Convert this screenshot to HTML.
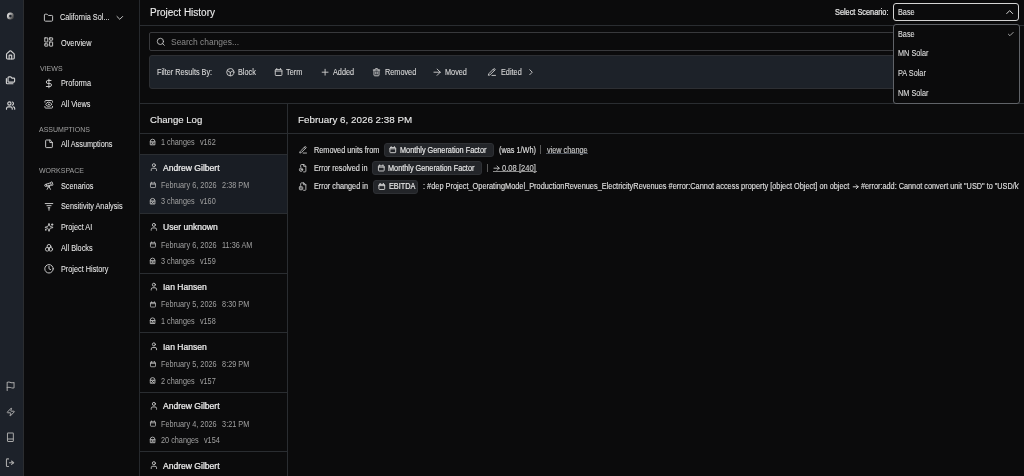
<!DOCTYPE html>
<html><head><meta charset="utf-8">
<style>
*{box-sizing:border-box;margin:0;padding:0}
html,body{width:1024px;height:476px;overflow:hidden;background:#0b0b0c;font-family:"Liberation Sans",sans-serif;color:#e6e6e6}
.a{position:absolute;white-space:nowrap}
svg{position:absolute;overflow:visible}
#rail{position:absolute;left:0;top:0;width:24px;height:476px;background:#1d222a;border-right:1px solid #2b2d30}
#side{position:absolute;left:24px;top:0;width:116px;height:476px;background:#0b0b0c;border-right:1px solid #26292d}
.t{transform:scaleY(1.15);transform-origin:0 50%;will-change:transform}
.nav{font-size:7.3px;line-height:10px;color:#ebebeb;-webkit-text-stroke:0.04px #ebebeb}
.sec{font-size:7px;line-height:10px;color:#a0a0a0}
.fl{font-size:7.3px;line-height:10px;color:#d8d8d8;-webkit-text-stroke:0.1px #d8d8d8}
.dd{font-size:7.3px;line-height:10px;color:#dcdcdc;-webkit-text-stroke:0.1px #dcdcdc}
.ls{font-size:7.3px;line-height:10px;color:#a0a0a0}
.ln{font-size:8.55px;line-height:10px;color:#f0f0f0;-webkit-text-stroke:0.22px #f0f0f0;will-change:transform}
.dt{font-size:7.3px;line-height:10px;color:#e0e0e0;-webkit-text-stroke:0.1px #e0e0e0}
.hd{color:#ececec;-webkit-text-stroke:0.12px #ececec;will-change:transform}
.ck{color:#e8e8e8;-webkit-text-stroke:0.15px #e8e8e8}
.chip{position:absolute;background:#232529;border:1px solid #2e3034;border-radius:3px}
.hl{position:absolute;height:1px;background:#2a2d31}
.vl{position:absolute;width:1px;background:#2a2d31}
</style></head><body>
<div id="rail"></div>
<svg style="left:0;top:0" width="1024" height="476" viewBox="0 0 1024 476"><defs><linearGradient id="lg" x1="0" y1="0.3" x2="1" y2="0.8"><stop offset="0" stop-color="#d4d4d4"/><stop offset="0.6" stop-color="#8a8a8a"/><stop offset="1" stop-color="#4a4a4a"/></linearGradient></defs>
<circle cx="10.4" cy="16.1" r="2.4" fill="none" stroke="url(#lg)" stroke-width="2.2"/><g transform="translate(5.240,49.940) scale(0.43)" fill="none" stroke="#d2d2d2" stroke-width="2.674" stroke-linecap="round" stroke-linejoin="round"><path d="M15 21v-8a1 1 0 0 0-1-1h-4a1 1 0 0 0-1 1v8"/><path d="M3 10a2 2 0 0 1 .709-1.528l7-5.999a2 2 0 0 1 2.582 0l7 5.999A2 2 0 0 1 21 10v9a2 2 0 0 1-2 2H5a2 2 0 0 1-2-2z"/></g><g transform="translate(5.580,75.180) scale(0.41)" fill="none" stroke="#d2d2d2" stroke-width="2.805" stroke-linecap="round" stroke-linejoin="round"><path d="M20 17a2 2 0 0 0 2-2V9a2 2 0 0 0-2-2h-3.9a2 2 0 0 1-1.69-.9l-.81-1.2a2 2 0 0 0-1.67-.9H8a2 2 0 0 0-2 2v9a2 2 0 0 0 2 2Z"/><path d="M2 8v11a2 2 0 0 0 2 2h14"/></g><g transform="translate(5.680,100.680) scale(0.41)" fill="none" stroke="#d2d2d2" stroke-width="2.805" stroke-linecap="round" stroke-linejoin="round"><path d="M16 21v-2a4 4 0 0 0-4-4H6a4 4 0 0 0-4 4v2"/><circle cx="9" cy="7" r="4"/><path d="M22 21v-2a4 4 0 0 0-3-3.87"/><path d="M16 3.13a4 4 0 0 1 0 7.75"/></g><g transform="translate(5.440,381.140) scale(0.43)" fill="none" stroke="#a8a8a8" stroke-width="2.326" stroke-linecap="round" stroke-linejoin="round"><path d="M4 15s1-1 4-1 5 2 8 2 4-1 4-1V3s-1 1-4 1-5-2-8-2-4 1-4 1z"/><path d="M4 22v-7"/></g><g transform="translate(6.000,407.200) scale(0.4)" fill="none" stroke="#a8a8a8" stroke-width="2.500" stroke-linecap="round" stroke-linejoin="round"><path d="M4 14a1 1 0 0 1-.78-1.63l9.9-10.2a.5.5 0 0 1 .86.46l-1.92 6.02A1 1 0 0 0 13 10h7a1 1 0 0 1 .78 1.63l-9.9 10.2a.5.5 0 0 1-.86-.46l1.92-6.02A1 1 0 0 0 11 14z"/></g><g transform="translate(5.360,432.260) scale(0.42)" fill="none" stroke="#a8a8a8" stroke-width="2.381" stroke-linecap="round" stroke-linejoin="round"><rect x="5" y="2" width="14" height="20" rx="1.5"/><path d="M5 16h14"/></g><g transform="translate(5.210,457.660) scale(0.42)" fill="none" stroke="#a8a8a8" stroke-width="2.619" stroke-linecap="round" stroke-linejoin="round"><path d="M8 3H5a2 2 0 0 0-2 2v14a2 2 0 0 0 2 2h3"/><path d="m15 8 5 4-5 4"/><path d="M20 12H10"/></g></svg>
<div id="side"></div>
<svg style="left:0;top:0" width="1024" height="476" viewBox="0 0 1024 476"><g transform="translate(43.580,12.980) scale(0.41)" fill="none" stroke="#cfcfcf" stroke-width="2.317" stroke-linecap="round" stroke-linejoin="round"><path d="M20 20a2 2 0 0 0 2-2V8a2 2 0 0 0-2-2h-7.9a2 2 0 0 1-1.69-.9L9.6 3.9A2 2 0 0 0 7.93 3H4a2 2 0 0 0-2 2v13a2 2 0 0 0 2 2Z"/></g><g transform="translate(114.160,12.260) scale(0.47)" fill="none" stroke="#cfcfcf" stroke-width="2.021" stroke-linecap="round" stroke-linejoin="round"><path d="m6 9 6 6 6-6"/></g><g transform="translate(43.180,36.480) scale(0.46)" fill="none" stroke="#cfcfcf" stroke-width="2.065" stroke-linecap="round" stroke-linejoin="round"><rect width="6.5" height="9" x="3.5" y="3" rx="0.5"/><rect width="6.5" height="5" x="14" y="3" rx="0.5"/><rect width="6.5" height="9" x="14" y="12" rx="0.5"/><rect width="6.5" height="5" x="3.5" y="16" rx="0.5"/></g><g transform="translate(43.740,78.340) scale(0.43)" fill="none" stroke="#cfcfcf" stroke-width="2.209" stroke-linecap="round" stroke-linejoin="round"><line x1="12" x2="12" y1="2" y2="22"/><path d="M17 5H9.5a3.5 3.5 0 0 0 0 7h5a3.5 3.5 0 0 1 0 7H6"/></g><g transform="translate(43.660,99.260) scale(0.42)" fill="none" stroke="#cfcfcf" stroke-width="2.262" stroke-linecap="round" stroke-linejoin="round"><path d="M21 17v2a2 2 0 0 1-2 2H5a2 2 0 0 1-2-2v-2"/><path d="M21 7V5a2 2 0 0 0-2-2H5a2 2 0 0 0-2 2v2"/><circle cx="12" cy="12" r="1"/><path d="M18.944 12.33a1 1 0 0 0 0-.66 7.5 7.5 0 0 0-13.888 0 1 1 0 0 0 0 .66 7.5 7.5 0 0 0 13.888 0"/></g><g transform="translate(43.960,138.760) scale(0.42)" fill="none" stroke="#cfcfcf" stroke-width="2.262" stroke-linecap="round" stroke-linejoin="round"><path d="M14 3H5.5A1.5 1.5 0 0 0 4 4.5v15A1.5 1.5 0 0 0 5.5 21h13a1.5 1.5 0 0 0 1.5-1.5V9Z"/><path d="M14 3v6h6"/></g><g transform="translate(43.760,180.560) scale(0.42)" fill="none" stroke="#cfcfcf" stroke-width="2.143" stroke-linecap="round" stroke-linejoin="round"><path d="m10.065 12.493-6.18 1.318a.934.934 0 0 1-1.108-.702l-.537-2.15a1.07 1.07 0 0 1 .691-1.265l13.504-4.44"/><path d="m13.56 11.747 4.332-.924"/><path d="m16 21-3.105-6.21"/><path d="M16.485 5.94a2 2 0 0 1 1.455-2.425l1.09-.272a1 1 0 0 1 1.212.727l1.515 6.06a1 1 0 0 1-.727 1.213l-1.09.272a2 2 0 0 1-2.425-1.455z"/><path d="m6.158 8.633 1.114 4.456"/><path d="m8 21 3.105-6.21"/><circle cx="12" cy="13" r="2"/></g><g transform="translate(43.960,201.460) scale(0.42)" fill="none" stroke="#cfcfcf" stroke-width="2.262" stroke-linecap="round" stroke-linejoin="round"><path d="M3 5h18"/><path d="M7 10h10"/><path d="M10 15h4"/><path d="M12 15v6"/></g><g transform="translate(44.200,222.600) scale(0.4)" fill="none" stroke="#cfcfcf" stroke-width="2.250" stroke-linecap="round" stroke-linejoin="round"><path d="M9.937 15.5A2 2 0 0 0 8.5 14.063l-6.135-1.582a.5.5 0 0 1 0-.962L8.5 9.936A2 2 0 0 0 9.937 8.5l1.582-6.135a.5.5 0 0 1 .963 0L14.063 8.5A2 2 0 0 0 15.5 9.937l6.135 1.581a.5.5 0 0 1 0 .964L15.5 14.063a2 2 0 0 0-1.437 1.437l-1.582 6.135a.5.5 0 0 1-.963 0z"/><path d="M20 3v4"/><path d="M22 5h-4"/><path d="M4 17v2"/><path d="M5 18H3"/></g><g transform="translate(43.960,242.960) scale(0.42)" fill="none" stroke="#cfcfcf" stroke-width="2.143" stroke-linecap="round" stroke-linejoin="round"><circle cx="12" cy="8" r="4.5"/><circle cx="8" cy="15" r="4.5"/><circle cx="16" cy="15" r="4.5"/></g><g transform="translate(43.960,263.760) scale(0.42)" fill="none" stroke="#cfcfcf" stroke-width="2.262" stroke-linecap="round" stroke-linejoin="round"><circle cx="12" cy="12" r="10"/><path d="M12 6v6l4 2"/></g></svg>
<div class="a t nav" style="left:60.2px;top:13.30px;">California Sol...</div>
<div class="a t nav" style="left:60.5px;top:38.80px;">Overview</div>
<div class="a t sec" style="left:39.5px;top:63.80px;">VIEWS</div>
<div class="a t nav" style="left:60.6px;top:79.30px;">Proforma</div>
<div class="a t nav" style="left:60.6px;top:100.10px;">All Views</div>
<div class="a t sec" style="left:39.2px;top:124.80px;">ASSUMPTIONS</div>
<div class="a t nav" style="left:60.6px;top:139.80px;">All Assumptions</div>
<div class="a t sec" style="left:39.2px;top:165.80px;">WORKSPACE</div>
<div class="a t nav" style="left:60.7px;top:181.50px;">Scenarios</div>
<div class="a t nav" style="left:60.7px;top:202.40px;">Sensitivity Analysis</div>
<div class="a t nav" style="left:60.7px;top:223.30px;">Project AI</div>
<div class="a t nav" style="left:60.7px;top:244.00px;">All Blocks</div>
<div class="a t nav" style="left:60.7px;top:264.60px;">Project History</div>
<div class="a hd" style="left:149.5px;top:5.5px;font-size:10px;line-height:14px">Project History</div>
<div class="hl" style="left:140px;top:25px;width:884px"></div>
<div style="position:absolute;left:149px;top:32px;width:866px;height:19px;border:1px solid #38393c;border-radius:2px"></div>
<div class="a t " style="left:170.5px;top:37.20px;font-size:8.45px;color:#8a8a8a;line-height:10px">Search changes...</div>
<div style="position:absolute;left:149px;top:55px;width:866px;height:34px;background:#1d2229;border:1px solid #2d2f33;border-radius:3px"></div>
<div class="hl" style="left:140px;top:103px;width:884px"></div>
<div class="vl" style="left:287px;top:103px;height:373px"></div>
<div class="hl" style="left:140px;top:133px;width:884px"></div>
<svg style="left:0;top:0" width="1024" height="476" viewBox="0 0 1024 476"><g transform="translate(156.120,37.120) scale(0.39)" fill="none" stroke="#c4c4c4" stroke-width="2.308" stroke-linecap="round" stroke-linejoin="round"><circle cx="11" cy="11" r="8"/><path d="m21 21-4.3-4.3"/></g><g transform="translate(225.740,67.640) scale(0.38)" fill="none" stroke="#c8c8c8" stroke-width="2.500" stroke-linecap="round" stroke-linejoin="round"><circle cx="12" cy="12" r="9.5"/><path d="m4.5 8 7.5 4.5 7.5-4.5"/><path d="M12 12.5V21.5"/></g><g transform="translate(274.160,67.760) scale(0.37)" fill="none" stroke="#c8c8c8" stroke-width="2.568" stroke-linecap="round" stroke-linejoin="round"><path d="M7 2v3"/><path d="M17 2v3"/><rect width="18" height="16" x="3" y="5" rx="2"/><path d="M3 9h18"/></g><g transform="translate(320.060,67.160) scale(0.42)" fill="none" stroke="#c8c8c8" stroke-width="2.262" stroke-linecap="round" stroke-linejoin="round"><path d="M5 12h14"/><path d="M12 5v14"/></g><g transform="translate(372.180,67.880) scale(0.36)" fill="none" stroke="#c8c8c8" stroke-width="2.639" stroke-linecap="round" stroke-linejoin="round"><path d="M3 6h18"/><path d="M19 6v14c0 1-1 2-2 2H7c-1 0-2-1-2-2V6"/><path d="M8 6V4c0-1 1-2 2-2h4c1 0 2 1 2 2v2"/><line x1="10" x2="10" y1="11" y2="17"/><line x1="14" x2="14" y1="11" y2="17"/></g><g transform="translate(431.700,66.800) scale(0.45)" fill="none" stroke="#c8c8c8" stroke-width="2.111" stroke-linecap="round" stroke-linejoin="round"><path d="M5 12h14"/><path d="m12 5 7 7-7 7"/></g><g transform="translate(487.100,67.400) scale(0.4)" fill="none" stroke="#c8c8c8" stroke-width="2.375" stroke-linecap="round" stroke-linejoin="round"><path d="M12 20h9"/><path d="M16.376 3.622a1 1 0 0 1 3.002 3.002L7.368 18.635a2 2 0 0 1-.855.506l-2.872.838a.5.5 0 0 1-.62-.62l.838-2.872a2 2 0 0 1 .506-.854z"/><path d="m15 5 3 3"/></g><g transform="translate(525.960,67.160) scale(0.42)" fill="none" stroke="#c8c8c8" stroke-width="2.262" stroke-linecap="round" stroke-linejoin="round"><path d="m9 18 6-6-6-6"/></g></svg>
<div class="a t fl" style="left:156.7px;top:68.10px;">Filter Results By:</div>
<div class="a t fl" style="left:237.5px;top:68.10px;">Block</div>
<div class="a t fl" style="left:285.9px;top:68.10px;">Term</div>
<div class="a t fl" style="left:333px;top:68.10px;">Added</div>
<div class="a t fl" style="left:384.5px;top:68.10px;">Removed</div>
<div class="a t fl" style="left:444.7px;top:68.10px;">Moved</div>
<div class="a t fl" style="left:500.5px;top:68.10px;">Edited</div>
<div class="a hd" style="left:149.8px;top:113px;font-size:9.6px;line-height:14px">Change Log</div>
<div style="position:absolute;left:140px;top:155px;width:147px;height:58px;background:#191d24"></div>
<div class="hl" style="left:140px;top:154px;width:147px"></div>
<div class="hl" style="left:140px;top:213px;width:147px"></div>
<div class="hl" style="left:140px;top:273px;width:147px"></div>
<div class="hl" style="left:140px;top:332px;width:147px"></div>
<div class="hl" style="left:140px;top:392px;width:147px"></div>
<div class="hl" style="left:140px;top:451px;width:147px"></div>
<div class="a t ls" style="left:160.9px;top:138.10px;">1 changes<span style="margin-left:5.2px">v162</span></div>
<div class="a ln" style="left:163.3px;top:162.60px">Andrew Gilbert</div>
<div class="a t ls" style="left:160.9px;top:180.80px;">February 6, 2026<span style="margin-left:5.5px">2:38 PM</span></div>
<div class="a t ls" style="left:160.9px;top:197.30px;">3 changes<span style="margin-left:5.2px">v160</span></div>
<div class="a ln" style="left:163.3px;top:222.30px">User unknown</div>
<div class="a t ls" style="left:160.9px;top:240.50px;">February 6, 2026<span style="margin-left:5.5px">11:36 AM</span></div>
<div class="a t ls" style="left:160.9px;top:257.00px;">3 changes<span style="margin-left:5.2px">v159</span></div>
<div class="a ln" style="left:163.3px;top:282.10px">Ian Hansen</div>
<div class="a t ls" style="left:160.9px;top:300.30px;">February 5, 2026<span style="margin-left:5.5px">8:30 PM</span></div>
<div class="a t ls" style="left:160.9px;top:316.80px;">1 changes<span style="margin-left:5.2px">v158</span></div>
<div class="a ln" style="left:163.3px;top:341.80px">Ian Hansen</div>
<div class="a t ls" style="left:160.9px;top:360.00px;">February 5, 2026<span style="margin-left:5.5px">8:29 PM</span></div>
<div class="a t ls" style="left:160.9px;top:376.50px;">2 changes<span style="margin-left:5.2px">v157</span></div>
<div class="a ln" style="left:163.3px;top:401.30px">Andrew Gilbert</div>
<div class="a t ls" style="left:160.9px;top:419.50px;">February 4, 2026<span style="margin-left:5.5px">3:21 PM</span></div>
<div class="a t ls" style="left:160.9px;top:436.00px;">20 changes<span style="margin-left:5.2px">v154</span></div>
<div class="a ln" style="left:163.3px;top:460.60px">Andrew Gilbert</div>
<svg style="left:0;top:0" width="1024" height="476" viewBox="0 0 1024 476"><g transform="translate(149.120,138.620) scale(0.29)" fill="none" stroke="#b8b8b8" stroke-width="3.103" stroke-linecap="round" stroke-linejoin="round"><path d="M4 20V10a8 8 0 0 1 16 0v10z"/><path d="M4 11h16"/><path d="m8 11 8 9"/><path d="m16 11-8 9"/></g><g transform="translate(149.340,162.540) scale(0.38)" fill="none" stroke="#c8c8c8" stroke-width="2.368" stroke-linecap="round" stroke-linejoin="round"><path d="M19 21v-2a4 4 0 0 0-4-4H9a4 4 0 0 0-4 4v2"/><circle cx="12" cy="7" r="4"/></g><g transform="translate(149.640,181.640) scale(0.28)" fill="none" stroke="#b8b8b8" stroke-width="2.857" stroke-linecap="round" stroke-linejoin="round"><path d="M7 2v3"/><path d="M17 2v3"/><rect width="18" height="16" x="3" y="5" rx="2"/><path d="M3 9h18"/></g><g transform="translate(149.120,197.820) scale(0.29)" fill="none" stroke="#b8b8b8" stroke-width="3.103" stroke-linecap="round" stroke-linejoin="round"><path d="M4 20V10a8 8 0 0 1 16 0v10z"/><path d="M4 11h16"/><path d="m8 11 8 9"/><path d="m16 11-8 9"/></g><g transform="translate(149.340,222.240) scale(0.38)" fill="none" stroke="#c8c8c8" stroke-width="2.368" stroke-linecap="round" stroke-linejoin="round"><path d="M19 21v-2a4 4 0 0 0-4-4H9a4 4 0 0 0-4 4v2"/><circle cx="12" cy="7" r="4"/></g><g transform="translate(149.640,241.340) scale(0.28)" fill="none" stroke="#b8b8b8" stroke-width="2.857" stroke-linecap="round" stroke-linejoin="round"><path d="M7 2v3"/><path d="M17 2v3"/><rect width="18" height="16" x="3" y="5" rx="2"/><path d="M3 9h18"/></g><g transform="translate(149.120,257.520) scale(0.29)" fill="none" stroke="#b8b8b8" stroke-width="3.103" stroke-linecap="round" stroke-linejoin="round"><path d="M4 20V10a8 8 0 0 1 16 0v10z"/><path d="M4 11h16"/><path d="m8 11 8 9"/><path d="m16 11-8 9"/></g><g transform="translate(149.340,282.040) scale(0.38)" fill="none" stroke="#c8c8c8" stroke-width="2.368" stroke-linecap="round" stroke-linejoin="round"><path d="M19 21v-2a4 4 0 0 0-4-4H9a4 4 0 0 0-4 4v2"/><circle cx="12" cy="7" r="4"/></g><g transform="translate(149.640,301.140) scale(0.28)" fill="none" stroke="#b8b8b8" stroke-width="2.857" stroke-linecap="round" stroke-linejoin="round"><path d="M7 2v3"/><path d="M17 2v3"/><rect width="18" height="16" x="3" y="5" rx="2"/><path d="M3 9h18"/></g><g transform="translate(149.120,317.320) scale(0.29)" fill="none" stroke="#b8b8b8" stroke-width="3.103" stroke-linecap="round" stroke-linejoin="round"><path d="M4 20V10a8 8 0 0 1 16 0v10z"/><path d="M4 11h16"/><path d="m8 11 8 9"/><path d="m16 11-8 9"/></g><g transform="translate(149.340,341.740) scale(0.38)" fill="none" stroke="#c8c8c8" stroke-width="2.368" stroke-linecap="round" stroke-linejoin="round"><path d="M19 21v-2a4 4 0 0 0-4-4H9a4 4 0 0 0-4 4v2"/><circle cx="12" cy="7" r="4"/></g><g transform="translate(149.640,360.840) scale(0.28)" fill="none" stroke="#b8b8b8" stroke-width="2.857" stroke-linecap="round" stroke-linejoin="round"><path d="M7 2v3"/><path d="M17 2v3"/><rect width="18" height="16" x="3" y="5" rx="2"/><path d="M3 9h18"/></g><g transform="translate(149.120,377.020) scale(0.29)" fill="none" stroke="#b8b8b8" stroke-width="3.103" stroke-linecap="round" stroke-linejoin="round"><path d="M4 20V10a8 8 0 0 1 16 0v10z"/><path d="M4 11h16"/><path d="m8 11 8 9"/><path d="m16 11-8 9"/></g><g transform="translate(149.340,401.240) scale(0.38)" fill="none" stroke="#c8c8c8" stroke-width="2.368" stroke-linecap="round" stroke-linejoin="round"><path d="M19 21v-2a4 4 0 0 0-4-4H9a4 4 0 0 0-4 4v2"/><circle cx="12" cy="7" r="4"/></g><g transform="translate(149.640,420.340) scale(0.28)" fill="none" stroke="#b8b8b8" stroke-width="2.857" stroke-linecap="round" stroke-linejoin="round"><path d="M7 2v3"/><path d="M17 2v3"/><rect width="18" height="16" x="3" y="5" rx="2"/><path d="M3 9h18"/></g><g transform="translate(149.120,436.520) scale(0.29)" fill="none" stroke="#b8b8b8" stroke-width="3.103" stroke-linecap="round" stroke-linejoin="round"><path d="M4 20V10a8 8 0 0 1 16 0v10z"/><path d="M4 11h16"/><path d="m8 11 8 9"/><path d="m16 11-8 9"/></g><g transform="translate(149.340,460.540) scale(0.38)" fill="none" stroke="#c8c8c8" stroke-width="2.368" stroke-linecap="round" stroke-linejoin="round"><path d="M19 21v-2a4 4 0 0 0-4-4H9a4 4 0 0 0-4 4v2"/><circle cx="12" cy="7" r="4"/></g></svg>
<div class="a hd" style="left:297.7px;top:113px;font-size:9.84px;line-height:14px;-webkit-text-stroke:0.1px #ececec">February 6, 2026 2:38 PM</div>
<div class="chip" style="left:383.5px;top:143px;width:110px;height:13.6px"></div>
<div class="chip" style="left:372px;top:161.2px;width:109.5px;height:13.6px"></div>
<div class="chip" style="left:372.5px;top:180px;width:45.5px;height:13.6px"></div>
<div class="a t dt" style="left:313.8px;top:145.60px;">Removed units from</div>
<div class="a t dt ck" style="left:399.8px;top:145.60px;">Monthly Generation Factor</div>
<div class="a t dt" style="left:498.6px;top:145.60px;">(was 1/Wh)</div>
<div style="position:absolute;left:540px;top:145px;width:1px;height:8.6px;background:#5a5a5a"></div>
<div class="a t dt" style="left:546.5px;top:145.60px;color:#c4c4c4">view change</div>
<div style="position:absolute;left:546px;top:153px;width:41.5px;height:1px;background:#4d525a"></div>
<div class="a t dt" style="left:313.8px;top:163.90px;">Error resolved in</div>
<div class="a t dt ck" style="left:388.3px;top:163.90px;">Monthly Generation Factor</div>
<div style="position:absolute;left:487px;top:163.8px;width:1px;height:8.5px;background:#5a5a5a"></div>
<div class="a t dt" style="left:502.2px;top:163.90px;color:#c8c8c8;font-size:7.6px">0.08 [240]</div>
<div style="position:absolute;left:493px;top:171.4px;width:44px;height:1px;background:#8c8c8c"></div>
<svg style="left:0;top:0" width="1024" height="476" viewBox="0 0 1024 476"><path d="M494 168.2 H499.2 M497 166 L499.2 168.2 L497 170.4" fill="none" stroke="#c8c8c8" stroke-width="0.9" stroke-linecap="round" stroke-linejoin="round"/></svg>
<div class="a t dt" style="left:313.8px;top:182.40px;">Error changed in</div>
<div class="a t dt ck" style="left:388.5px;top:182.40px;">EBITDA</div>
<div style="position:absolute;left:0;top:0;width:1019px;height:476px;overflow:hidden">
<div class="a t dt" style="left:423px;top:182.40px;font-size:7.38px">: #dep Project_OperatingModel_ProductionRevenues_ElectricityRevenues #error:Cannot access property [object Object] on object</div>
<div class="a t dt" style="left:861px;top:182.40px;">#error:add: Cannot convert unit "USD" to "USD/kWh"</div>
<svg style="left:0;top:0" width="1024" height="476" viewBox="0 0 1024 476"><path d="M853.2 186.8 H858.2 M856.2 184.8 L858.2 186.8 L856.2 188.8" fill="none" stroke="#d8d8d8" stroke-width="0.95" stroke-linecap="round" stroke-linejoin="round"/></svg>
</div>
<svg style="left:0;top:0" width="1024" height="476" viewBox="0 0 1024 476"><g transform="translate(388.960,145.960) scale(0.32)" fill="none" stroke="#d0d0d0" stroke-width="2.969" stroke-linecap="round" stroke-linejoin="round"><path d="M7 2v3"/><path d="M17 2v3"/><rect width="18" height="16" x="3" y="5" rx="2"/><path d="M3 9h18"/></g><g transform="translate(377.460,164.260) scale(0.32)" fill="none" stroke="#d0d0d0" stroke-width="2.969" stroke-linecap="round" stroke-linejoin="round"><path d="M7 2v3"/><path d="M17 2v3"/><rect width="18" height="16" x="3" y="5" rx="2"/><path d="M3 9h18"/></g><g transform="translate(377.960,182.760) scale(0.32)" fill="none" stroke="#d0d0d0" stroke-width="2.969" stroke-linecap="round" stroke-linejoin="round"><path d="M7 2v3"/><path d="M17 2v3"/><rect width="18" height="16" x="3" y="5" rx="2"/><path d="M3 9h18"/></g><g transform="translate(298.540,145.440) scale(0.38)" fill="none" stroke="#bbbbbb" stroke-width="2.500" stroke-linecap="round" stroke-linejoin="round"><path d="M12 20h9"/><path d="M16.376 3.622a1 1 0 0 1 3.002 3.002L7.368 18.635a2 2 0 0 1-.855.506l-2.872.838a.5.5 0 0 1-.62-.62l.838-2.872a2 2 0 0 1 .506-.854z"/><path d="m15 5 3 3"/></g><g transform="translate(298.460,163.760) scale(0.37)" fill="none" stroke="#bbbbbb" stroke-width="2.568" stroke-linecap="round" stroke-linejoin="round"><path d="M6 9V4a2 2 0 0 1 2-2h7l5 5v13a2 2 0 0 1-2 2h-4"/><path d="M14 2v5h6"/><circle cx="7" cy="16" r="4.5"/><path d="m5.2 16 1.3 1.3 2.3-2.3"/></g><g transform="translate(298.460,182.160) scale(0.37)" fill="none" stroke="#bbbbbb" stroke-width="2.568" stroke-linecap="round" stroke-linejoin="round"><path d="M6 9V4a2 2 0 0 1 2-2h7l5 5v13a2 2 0 0 1-2 2h-4"/><path d="M14 2v5h6"/><rect x="2.5" y="12.5" width="9" height="8" rx="1.5"/><path d="M7 14.5v3"/></g></svg>
<div class="a t " style="left:834.5px;top:7.80px;font-size:7.35px;line-height:10px;color:#e6e6e6;-webkit-text-stroke:0.2px #e6e6e6">Select Scenario:</div>
<div style="position:absolute;left:893px;top:3px;width:126px;height:18px;border:1px solid #d4d4d4;border-radius:3px;background:#0b0b0c"></div>
<div class="a t dd" style="left:898px;top:7.80px;color:#e6e6e6">Base</div>
<div style="position:absolute;left:893px;top:24px;width:127px;height:79.5px;border:1px solid #606368;border-radius:3px;background:#0b0b0c"></div>
<div class="a t dd" style="left:898px;top:30.00px;">Base</div>
<div class="a t dd" style="left:898px;top:49.40px;">MN Solar</div>
<div class="a t dd" style="left:898px;top:69.20px;">PA Solar</div>
<div class="a t dd" style="left:898px;top:88.60px;">NM Solar</div>
<svg style="left:0;top:0" width="1024" height="476" viewBox="0 0 1024 476"><g transform="translate(1003.700,6.100) scale(0.5)" fill="none" stroke="#d8d8d8" stroke-width="2.000" stroke-linecap="round" stroke-linejoin="round"><path d="m18 15-6-6-6 6"/></g><g transform="translate(1007.200,30.600) scale(0.3)" fill="none" stroke="#b4b4b4" stroke-width="3.000" stroke-linecap="round" stroke-linejoin="round"><path d="M20 6 9 17l-5-5"/></g></svg>
</body></html>
